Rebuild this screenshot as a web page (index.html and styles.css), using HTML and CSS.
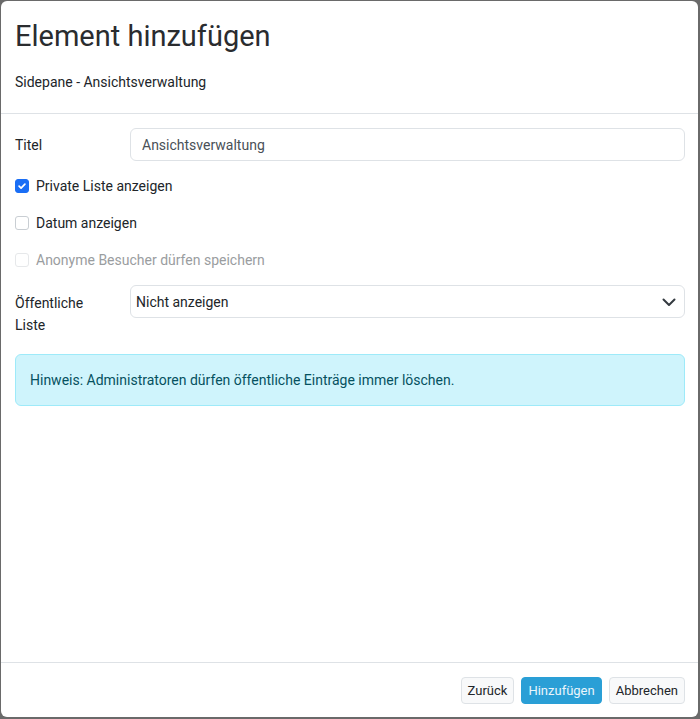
FILE: index.html
```html
<!DOCTYPE html>
<html lang="de">
<head>
<meta charset="utf-8">
<title>Element hinzufügen</title>
<link rel="stylesheet" href="styles.css">
</head>
<body>
<div class="modal">
  <header class="modal-header">
    <h1 class="modal-title">Element hinzufügen</h1>
    <p class="modal-subtitle">Sidepane - Ansichtsverwaltung</p>
  </header>
  <main class="modal-body">
    <div class="form-row form-row-center">
      <label class="form-label" for="titel">Titel</label>
      <input class="form-input" id="titel" type="text" value="Ansichtsverwaltung">
    </div>
    <div class="check-list">
      <label class="check">
        <span class="check-box checked">
          <svg viewBox="0 0 14 14" width="14" height="14"><path d="M3.6 7.2 L5.9 9.4 L10.4 4.8" fill="none" stroke="#fff" stroke-width="2" stroke-linecap="round" stroke-linejoin="round"/></svg>
        </span>
        <span class="check-label">Private Liste anzeigen</span>
      </label>
      <label class="check">
        <span class="check-box"></span>
        <span class="check-label">Datum anzeigen</span>
      </label>
      <label class="check disabled">
        <span class="check-box"></span>
        <span class="check-label">Anonyme Besucher dürfen speichern</span>
      </label>
    </div>
    <div class="form-row">
      <label class="form-label form-label-top" for="oeff">Öffentliche Liste</label>
      <div class="select-wrap">
        <select class="form-select" id="oeff">
          <option>Nicht anzeigen</option>
        </select>
        <svg class="select-chevron" viewBox="0 0 16 16" width="16" height="16"><path d="M2.5 5.5 L8 11 L13.5 5.5" fill="none" stroke="#343a40" stroke-width="2" stroke-linecap="round" stroke-linejoin="round"/></svg>
      </div>
    </div>
    <div class="alert">Hinweis: Administratoren dürfen öffentliche Einträge immer löschen.</div>
  </main>
  <footer class="modal-footer">
    <button class="btn btn-light" type="button">Zurück</button>
    <button class="btn btn-primary" type="button">Hinzufügen</button>
    <button class="btn btn-light" type="button">Abbrechen</button>
  </footer>
</div>
</body>
</html>
```
FILE: styles.css
```css
* { box-sizing: border-box; }
html, body { height: 100%; }
body {
  margin: 0;
  background: #6a6a6a;
  font-family: Roboto, "Liberation Sans", sans-serif;
  font-size: 14px;
  color: #212529;
  padding: 1px 2px 2px 1px;
}
.modal {
  height: 100%;
  background: #fff;
  border-radius: 6px;
  display: flex;
  flex-direction: column;
}
.modal-header {
  padding: 18px 13px 20px 14px;
  border-bottom: 1px solid #dee2e6;
}
.modal-title {
  margin: 0;
  font-size: 29px;
  font-weight: 400;
  line-height: 34px;
  color: #2a2c2f;
}
.modal-subtitle {
  margin: 19px 0 0;
  font-size: 14px;
  line-height: 21px;
  color: #212529;
}
.modal-body {
  flex: 1;
  padding: 14px 13px 14px 14px;
  display: flex;
  flex-direction: column;
}
.form-row {
  display: flex;
  align-items: flex-start;
}
.form-row-center { align-items: center; }
.form-label {
  width: 115px;
  flex: none;
  padding-right: 18px;
  line-height: 22px;
  color: #212529;
}
.form-row-center .form-label { padding-top: 1px; }
.form-label-top { padding-top: 7px; }
.form-input {
  flex: 1;
  height: 33px;
  border: 1px solid #dee2e6;
  border-radius: 6px;
  padding: 0 11px;
  font: inherit;
  color: #495057;
  background: #fff;
}
.check-list {
  display: flex;
  flex-direction: column;
  gap: 13px;
  margin: 13px 0;
}
.check {
  display: flex;
  align-items: center;
  gap: 7px;
  line-height: 24px;
}
.check-box {
  width: 14px;
  height: 14px;
  border: 1px solid #c9ced3;
  border-radius: 3px;
  background: #fff;
  display: flex;
  align-items: center;
  justify-content: center;
  flex: none;
}
.check-box.checked {
  background: #1a6ef5;
  border-color: #1a6ef5;
}
.check-box svg { display: block; }
.check.disabled .check-box { border-color: #e6e8ea; }
.check.disabled .check-label { color: #9a9da0; }
.select-wrap {
  flex: 1;
  position: relative;
}
.form-select {
  width: 100%;
  height: 33px;
  -webkit-appearance: none;
  appearance: none;
  border: 1px solid #dee2e6;
  border-radius: 6px;
  padding: 0 30px 0 5px;
  font: inherit;
  color: #212529;
  background: #fff;
}
.select-chevron {
  position: absolute;
  right: 8px;
  top: 9px;
  pointer-events: none;
}
.alert {
  margin-top: 18px;
  padding: 14px;
  line-height: 22px;
  background: #cff4fc;
  border: 1px solid #9eeaf9;
  border-radius: 6px;
  color: #055160;
}
.modal-footer {
  border-top: 1px solid #dee2e6;
  padding: 14px 13px 13px 14px;
  display: flex;
  justify-content: flex-end;
  gap: 7px;
}
.btn {
  height: 27px;
  padding: 0 6px;
  font-family: Roboto, "Liberation Sans", sans-serif;
  font-size: 13px;
  border-radius: 4px;
  border: 1px solid #dee2e6;
  cursor: pointer;
}
.btn-light {
  background: #f8f9fa;
  color: #212529;
}
.btn-primary {
  background: #2a9fd6;
  border-color: #2a9fd6;
  color: #eaf6fc;
}
```
